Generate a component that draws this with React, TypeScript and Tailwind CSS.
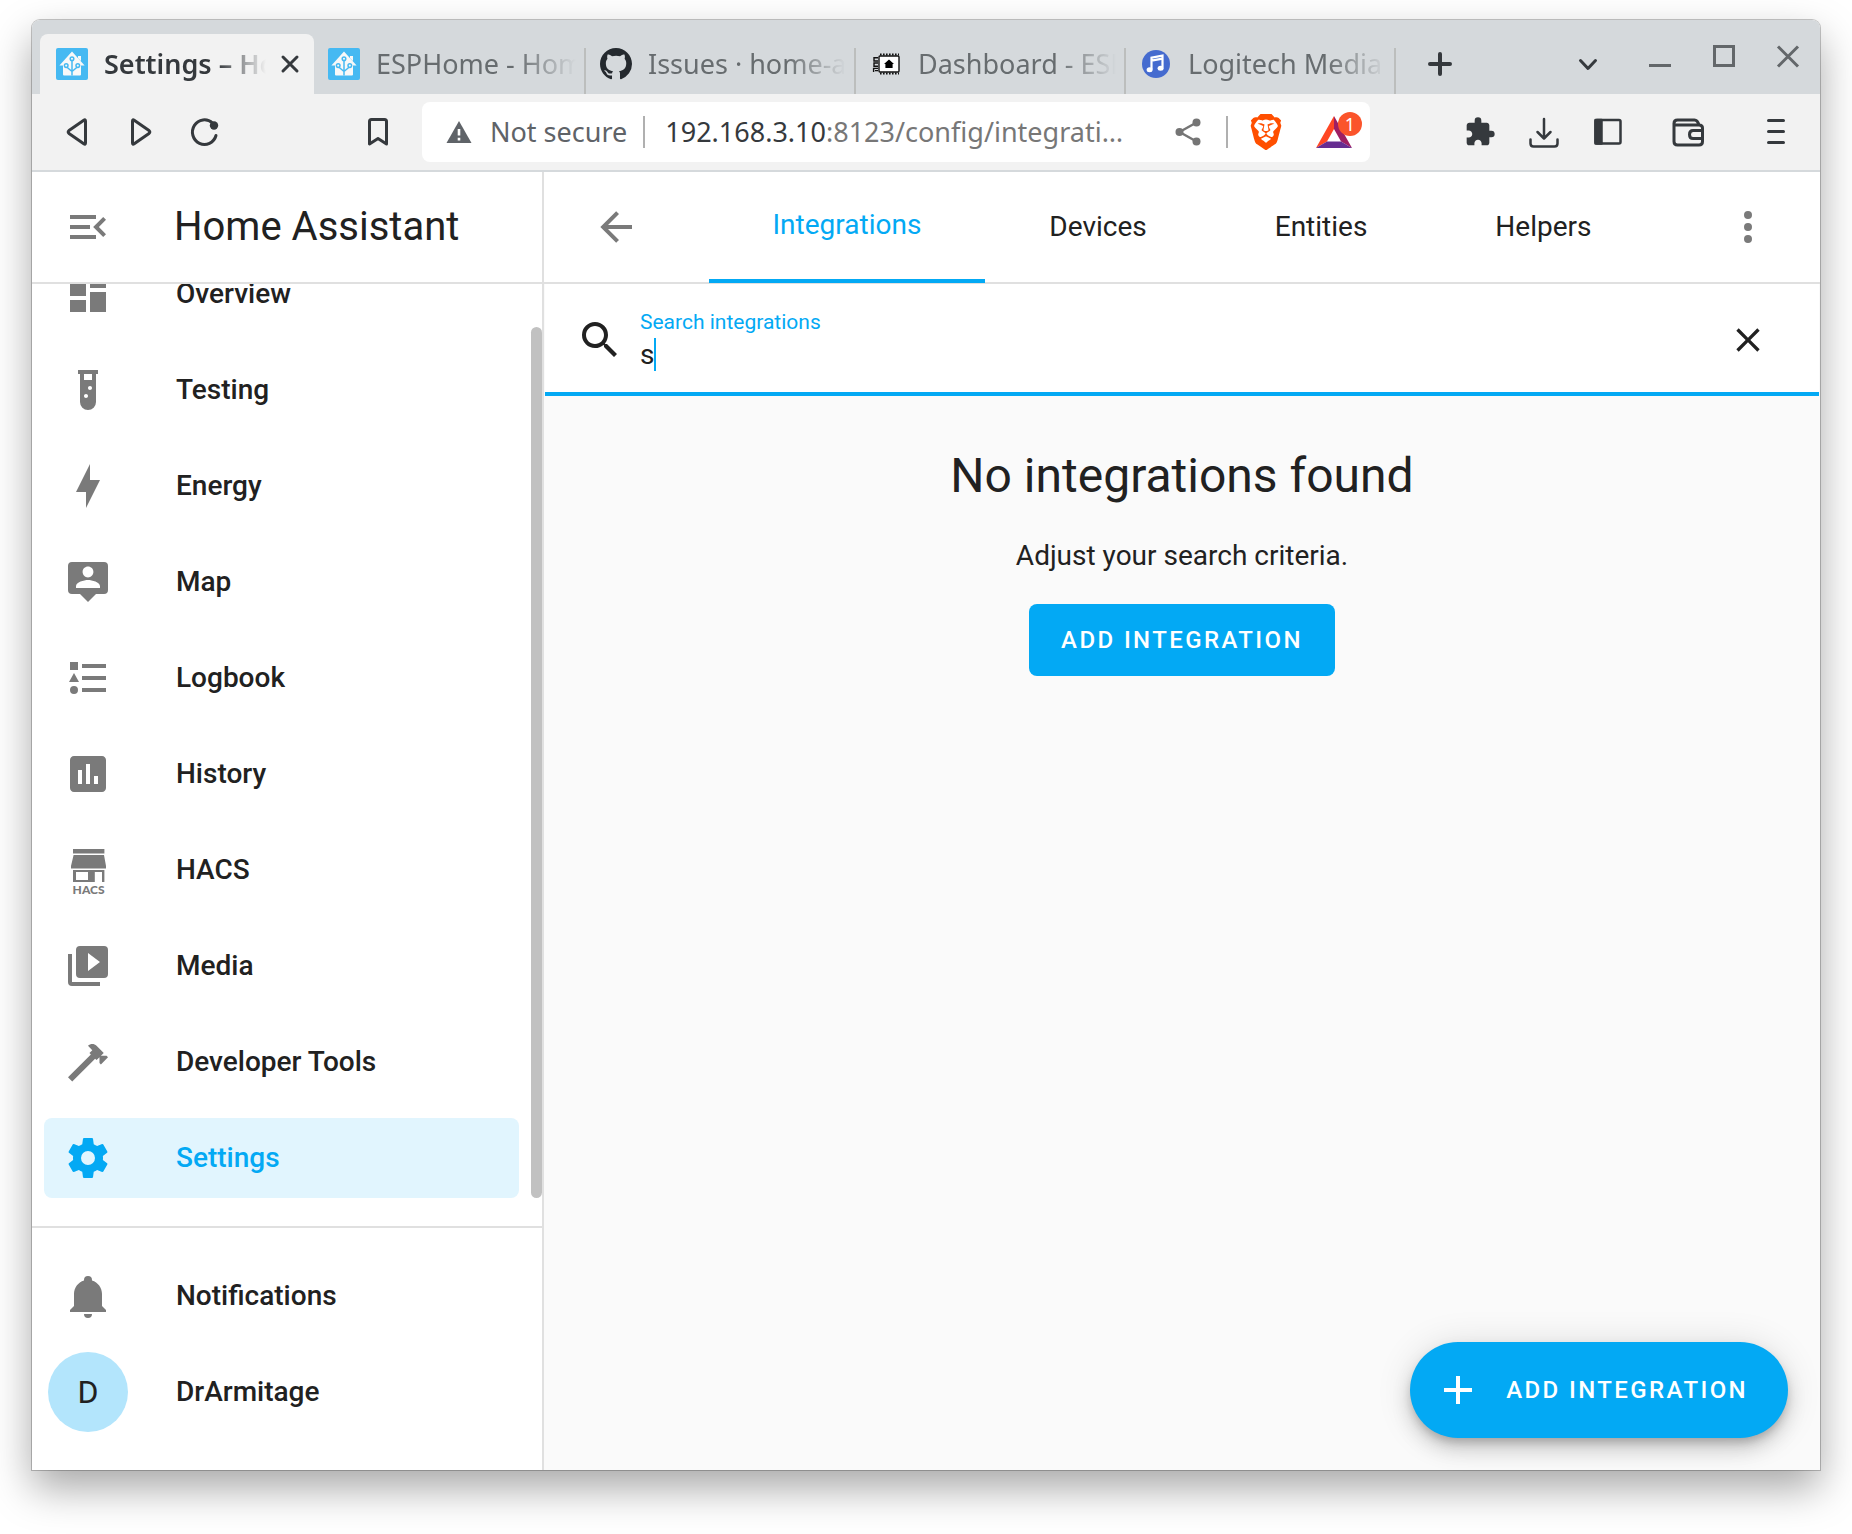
import type { ReactNode } from "react";
import { MdExtension } from "react-icons/md";
import { SiBrave } from "react-icons/si";

const mdi = {
  menuOpen:
    "M21,15.61L19.59,17L14.58,12L19.59,7L21,8.39L17.44,12L21,15.61M3,6H16V8H3V6M3,13V11H13V13H3M3,18V16H16V18H3Z",
  dashboard: "M13,3V9H21V3M13,21H21V11H13M3,21H11V15H3M3,13H11V3H3V13Z",
  testTube:
    "M7,2V4H8V18A4,4 0 0,0 12,22A4,4 0 0,0 16,18V4H17V2H7M11,16C10.4,16 10,15.6 10,15C10,14.4 10.4,14 11,14C11.6,14 12,14.4 12,15C12,15.6 11.6,16 11,16M13,12C12.4,12 12,11.6 12,11C12,10.4 12.4,10 13,10C13.6,10 14,10.4 14,11C14,11.6 13.6,12 13,12M14,7H10V4H14V7Z",
  bolt: "M11 15H6L13 1V9H18L11 23V15Z",
  tooltipAccount:
    "M20,2A2,2 0 0,1 22,4V16A2,2 0 0,1 20,18H16L12,22L8,18H4A2,2 0 0,1 2,16V4A2,2 0 0,1 4,2H20M12,4.3C10.5,4.3 9.3,5.5 9.3,7C9.3,8.5 10.5,9.7 12,9.7C13.5,9.7 14.7,8.5 14.7,7C14.7,5.5 13.5,4.3 12,4.3M18,15V14.1C18,12.1 14,11 12,11C10,11 6,12.1 6,14.1V15H18Z",
  listType:
    "M5,9.5L7.5,14H2.5L5,9.5M3,4H7V8H3V4M5,20A2,2 0 0,0 7,18A2,2 0 0,0 5,16A2,2 0 0,0 3,18A2,2 0 0,0 5,20M9,5V7H21V5H9M9,19H21V17H9V19M9,13H21V11H9V13Z",
  chartBox:
    "M9 17H7V10H9V17M13 17H11V7H13V17M17 17H15V13H17V17M19 3H5C3.89 3 3 3.89 3 5V19C3 20.11 3.89 21 5 21H19C20.11 21 21 20.11 21 19V5C21 3.89 20.11 3 19 3Z",
  playBoxMultiple:
    "M4,6H2V20A2,2 0 0,0 4,22H18V20H4V6M20,2H8A2,2 0 0,0 6,4V16A2,2 0 0,0 8,18H20A2,2 0 0,0 22,16V4A2,2 0 0,0 20,2M12,14.5V5.5L18,10L12,14.5Z",
  hammer:
    "M2,19.63L13.43,8.2L12.72,7.5L14.14,6.07L12,3.89C13.2,2.7 15.09,2.7 16.27,3.89L19.87,7.5L18.45,8.91H21.29L22,9.62L18.45,13.21L17.74,12.5V9.62L16.27,11.04L15.56,10.33L4.13,21.76L2,19.63Z",
  cog: "M12,15.5A3.5,3.5 0 0,1 8.5,12A3.5,3.5 0 0,1 12,8.5A3.5,3.5 0 0,1 15.5,12A3.5,3.5 0 0,1 12,15.5M19.43,12.97C19.47,12.65 19.5,12.33 19.5,12C19.5,11.67 19.47,11.34 19.43,11L21.54,9.37C21.73,9.22 21.78,8.95 21.66,8.73L19.66,5.27C19.54,5.05 19.27,4.96 19.05,5.05L16.56,6.05C16.04,5.66 15.5,5.32 14.87,5.07L14.5,2.42C14.46,2.18 14.25,2 14,2H10C9.75,2 9.54,2.18 9.5,2.42L9.13,5.07C8.5,5.32 7.96,5.66 7.44,6.05L4.95,5.05C4.73,4.96 4.46,5.05 4.34,5.27L2.34,8.73C2.21,8.95 2.27,9.22 2.46,9.37L4.57,11C4.53,11.34 4.5,11.67 4.5,12C4.5,12.33 4.53,12.65 4.57,12.97L2.46,14.63C2.27,14.78 2.21,15.05 2.34,15.27L4.34,18.73C4.46,18.95 4.73,19.03 4.95,18.95L7.44,17.94C7.96,18.34 8.5,18.68 9.13,18.93L9.5,21.58C9.54,21.82 9.75,22 10,22H14C14.25,22 14.46,21.82 14.5,21.58L14.87,18.93C15.5,18.67 16.04,18.34 16.56,17.94L19.05,18.95C19.27,19.03 19.54,18.95 19.66,18.73L21.66,15.27C21.78,15.05 21.73,14.78 21.54,14.63L19.43,12.97Z",
  bell: "M21,19V20H3V19L5,17V11C5,7.9 7.03,5.17 10,4.29C10,4.19 10,4.1 10,4A2,2 0 0,1 12,2A2,2 0 0,1 14,4C14,4.1 14,4.19 14,4.29C16.97,5.17 19,7.9 19,11V17L21,19M14,21A2,2 0 0,1 12,23A2,2 0 0,1 10,21",
  arrowLeft:
    "M20,11V13H8L13.5,18.5L12.08,19.92L4.16,12L12.08,4.08L13.5,5.5L8,11H20Z",
  dots: "M12,16A2,2 0 0,1 14,18A2,2 0 0,1 12,20A2,2 0 0,1 10,18A2,2 0 0,1 12,16M12,10A2,2 0 0,1 14,12A2,2 0 0,1 12,14A2,2 0 0,1 10,12A2,2 0 0,1 12,10M12,4A2,2 0 0,1 14,6A2,2 0 0,1 12,8A2,2 0 0,1 10,6A2,2 0 0,1 12,4Z",
  magnify:
    "M9.5,3A6.5,6.5 0 0,1 16,9.5C16,11.11 15.41,12.59 14.44,13.73L14.71,14H15.5L20.5,19L19,20.5L14,15.5V14.71L13.73,14.44C12.59,15.41 11.11,16 9.5,16A6.5,6.5 0 0,1 3,9.5A6.5,6.5 0 0,1 9.5,3M9.5,5C7,5 5,7 5,9.5C5,12 7,14 9.5,14C12,14 14,12 14,9.5C14,7 12,5 9.5,5Z",
  close:
    "M19,6.41L17.59,5L12,10.59L6.41,5L5,6.41L10.59,12L5,17.59L6.41,19L12,13.41L17.59,19L19,17.59L13.41,12L19,6.41Z",
  plus: "M19,13H13V19H11V13H5V11H11V5H13V11H19V13Z",
};

function Mdi({ path, className = "size-12" }: { path: string; className?: string }) {
  return (
    <svg viewBox="0 0 24 24" className={`shrink-0 ${className}`} fill="currentColor" fillRule="evenodd" aria-hidden="true">
      <path d={path} />
    </svg>
  );
}

function HacsIcon() {
  return (
    <svg viewBox="0 0 24 24" className="size-12 shrink-0" fill="currentColor" fillRule="evenodd" aria-hidden="true">
      <path d="M4.5 1.5H20.2V3.8H4.5ZM4.8 4.5H20L21 10V11.2H3.5V10ZM4.5 12H20.2V18H19V13H15.4V18H4.5ZM6 13V17H12V13Z" />
      <text x="12.3" y="23.9" fontSize="6" fontWeight="900" textAnchor="middle" fontFamily="Lato, sans-serif">
        HACS
      </text>
    </svg>
  );
}

function HomeAssistantFavicon() {
  return (
    <svg viewBox="0 0 32 32" className="size-8 shrink-0" aria-hidden="true">
      <rect width="32" height="32" rx="2" fill="#46b9f2" />
      <path d="M16 3.6 28.6 17.6H25V26.5Q25 27.4 24 27.4H8Q7 27.4 7 26.5V17.6H3.4ZM22 8H25V13L22 10Z" fill="#f8f8f8" />
      <g stroke="#46b9f2" strokeWidth="1.5" fill="none">
        <path d="M16 27.4V12.5M16 23.5 10.7 19M16 23.5 21.3 19" />
        <circle cx="16" cy="10.8" r="1.8" />
        <circle cx="10.2" cy="17.6" r="1.8" />
        <circle cx="21.8" cy="17.6" r="1.8" />
      </g>
    </svg>
  );
}

function GithubFavicon() {
  return (
    <svg viewBox="0 0 16 16" className="size-8 shrink-0" fill="#24292e" aria-hidden="true">
      <path d="M8 0C3.58 0 0 3.58 0 8c0 3.54 2.29 6.53 5.47 7.59.4.07.55-.17.55-.38 0-.19-.01-.82-.01-1.49-2.01.37-2.53-.49-2.69-.94-.09-.23-.48-.94-.82-1.13-.28-.15-.68-.52-.01-.53.63-.01 1.08.58 1.23.82.72 1.21 1.87.87 2.33.66.07-.52.28-.87.51-1.07-1.78-.2-3.64-.89-3.64-3.95 0-.87.31-1.59.82-2.15-.08-.2-.36-1.02.08-2.12 0 0 .67-.21 2.2.82.64-.18 1.32-.27 2-.27.68 0 1.36.09 2 .27 1.53-1.04 2.2-.82 2.2-.82.44 1.1.16 1.92.08 2.12.51.56.82 1.27.82 2.15 0 3.07-1.87 3.75-3.65 3.95.29.25.54.73.54 1.48 0 1.07-.01 1.93-.01 2.2 0 .21.15.46.55.38A8.013 8.013 0 0016 8c0-4.42-3.58-8-8-8z" />
    </svg>
  );
}

function ChipFavicon() {
  return (
    <svg viewBox="0 0 32 32" className="size-8 shrink-0" aria-hidden="true">
      <path d="M10 6.5H29M10 25.5H29" stroke="#111" strokeWidth="1.8" strokeDasharray="1.6 1.4" fill="none" />
      <rect x="9" y="8" width="20" height="16" rx="1" fill="#fff" stroke="#111" strokeWidth="1.4" />
      <path d="M8 9.7H4V13H8M8 15H4V18.2H8M8 20.4H3.6V24M8 22.6H5" stroke="#111" strokeWidth="1.4" fill="none" />
      <path d="M19 11.5 24 16H22.6V20H15.4V16H14Z" fill="#000" />
    </svg>
  );
}

function MusicFavicon() {
  return (
    <svg viewBox="0 0 32 32" className="size-8 shrink-0" aria-hidden="true">
      <circle cx="16" cy="16" r="14" fill="#456bcf" />
      <path d="M11.5 21.5V9.6L22.5 7.6V19.6M11.5 12.6 22.5 10.6" stroke="#fff" strokeWidth="2.2" fill="none" />
      <ellipse cx="9.6" cy="21.8" rx="3" ry="2.5" fill="#fff" />
      <ellipse cx="20.6" cy="20.2" rx="3" ry="2.5" fill="#fff" />
    </svg>
  );
}

function BatIcon() {
  return (
    <svg viewBox="0 0 36 32" className="h-8 w-9" aria-hidden="true">
      <path d="M18 0 0 32 11 25.5 18 13Z" fill="#ff4724" />
      <path d="M18 0 36 32 25 25.5 18 13Z" fill="#9e1f63" />
      <path d="M0 32H36L25 25.5H11Z" fill="#662d91" />
    </svg>
  );
}

function Stroke({ children, className = "size-8", width = 3 }: { children: ReactNode; className?: string; width?: number }) {
  return (
    <svg
      viewBox="0 0 32 32"
      className={`shrink-0 ${className}`}
      fill="none"
      stroke="currentColor"
      strokeWidth={width}
      strokeLinecap="round"
      strokeLinejoin="round"
      aria-hidden="true"
    >
      {children}
    </svg>
  );
}

function IconButton({ label, children, className = "" }: { label: string; children: ReactNode; className?: string }) {
  return (
    <button type="button" aria-label={label} className={`flex size-12 shrink-0 items-center justify-center ${className}`}>
      {children}
    </button>
  );
}

function BrowserTab({ icon, title, width = "w-[270px]" }: { icon: ReactNode; title: string; width?: string }) {
  return (
    <div className={`flex h-[60px] min-w-0 items-end ${width}`}>
      <button
        type="button"
        role="tab"
        aria-selected="false"
        className="flex h-[60px] min-w-0 flex-1 items-center gap-4 pr-2 pl-[14px] text-[#676c6f]"
      >
        {icon}
        <span className="min-w-0 flex-1 overflow-hidden text-left whitespace-nowrap [mask-image:linear-gradient(to_right,black_70%,transparent)]">
          {title}
        </span>
      </button>
      <span className="h-[46px] w-0.5 bg-[#bcbebd]" />
    </div>
  );
}

function TabStrip() {
  return (
    <div className="flex h-[74px] items-end rounded-t-lg bg-[#d5d9dc] pr-2 pl-2 text-[27px] text-[#35393d]">
      <div role="tablist" aria-label="Open pages" className="flex min-w-0 items-end">
        <div className="flex h-[60px] w-[274px] items-center rounded-t-lg bg-[#f2f2f2] pl-4">
          <button type="button" role="tab" aria-selected="true" className="flex min-w-0 flex-1 items-center gap-4 font-semibold">
            <HomeAssistantFavicon />
            <span className="min-w-0 flex-1 overflow-hidden text-left whitespace-nowrap [mask-image:linear-gradient(to_right,black_70%,transparent)]">
              Settings – Home Assistant
            </span>
          </button>
          <IconButton label="Close tab">
            <Stroke className="size-8" width={3}>
              <path d="M9 9 23 23M23 9 9 23" />
            </Stroke>
          </IconButton>
        </div>
        <BrowserTab icon={<HomeAssistantFavicon />} title="ESPHome - Home Assistant" width="w-[272px]" />
        <BrowserTab icon={<GithubFavicon />} title="Issues · home-assistant" />
        <BrowserTab icon={<ChipFavicon />} title="Dashboard - ESPHome" />
        <BrowserTab icon={<MusicFavicon />} title="Logitech Media Server" />
      </div>
      <div className="flex h-[60px] flex-1 items-center justify-between pl-5">
        <IconButton label="New tab">
          <Stroke width={4}>
            <path d="M16 6V26M6 16H26" />
          </Stroke>
        </IconButton>
        <IconButton label="Search tabs">
          <Stroke width={3}>
            <path d="M8.500 12.500 16 20.500 23.500 12.500" />
          </Stroke>
        </IconButton>
      </div>
      <div className="flex h-full items-center gap-4 pl-6 text-[#63676a]">
        <IconButton label="Minimise">
          <Stroke width={3}>
            <path d="M5 24.500H27" strokeLinecap="butt" />
          </Stroke>
        </IconButton>
        <IconButton label="Maximise">
          <Stroke width={3}>
            <rect x="6.500" y="5.500" width="19" height="19" strokeLinejoin="miter" />
          </Stroke>
        </IconButton>
        <IconButton label="Close window">
          <Stroke width={3}>
            <path d="M6 5.500 26 25.500M26 5.500 6 25.500" strokeLinecap="butt" />
          </Stroke>
        </IconButton>
      </div>
    </div>
  );
}

function Toolbar() {
  return (
    <div className="flex h-[78px] items-center border-b-2 border-[#d5d9dc] bg-[#f2f2f2] pr-5 pl-[21px] text-[#35393d]">
      <div className="flex gap-4">
        <IconButton label="Back">
          <Stroke>
            <path d="M24.500 5V27Q24.500 29 22.800 27.800L8 17.500Q6.500 16 8 14.500L22.800 4.200Q24.500 3 24.500 5Z" />
          </Stroke>
        </IconButton>
        <IconButton label="Forward">
          <Stroke>
            <path d="M7.500 5V27Q7.500 29 9.200 27.800L24 17.500Q25.500 16 24 14.500L9.200 4.200Q7.500 3 7.500 5Z" />
          </Stroke>
        </IconButton>
        <IconButton label="Reload">
          <Stroke>
            <path d="M23.500 7A12 12.300 0 1 0 27 19.500" />
            <circle cx="25" cy="9.500" r="4.200" fill="currentColor" stroke="none" />
          </Stroke>
        </IconButton>
      </div>
      <IconButton label="Bookmark" className="ml-[125px]">
        <Stroke>
          <path d="M7.500 5.500Q7.500 3.500 9.500 3.500H22.500Q24.500 3.500 24.500 5.500V28L16 22.500 7.500 28Z" />
        </Stroke>
      </IconButton>
      <div className="ml-5 flex h-[60px] min-w-0 flex-1 items-center rounded-lg bg-white pr-2 pl-6 text-[27px]">
        <svg viewBox="0 0 26 24" className="h-6 w-[26px] shrink-0" aria-hidden="true">
          <path d="M13 1 25.500 23H.500Z" fill="#5f6368" />
          <path d="M13 9V15.500M13 17.800V20.600" stroke="#fff" strokeWidth="2.600" />
        </svg>
        <span className="ml-[18px] whitespace-nowrap text-[#5f6368]">Not secure</span>
        <span className="ml-4 h-8 w-0.5 shrink-0 bg-[#b0b0b0]" />
        <div
          role="textbox"
          aria-label="Address"
          contentEditable
          suppressContentEditableWarning
          className="ml-5 min-w-0 flex-1 overflow-hidden whitespace-nowrap text-[#777]"
        >
          <span className="text-[#35393d]">192.168.3.10</span>:8123/config/integrati…
        </div>
        <IconButton label="Share" className="text-[#757575]">
          <Stroke width={2.5}>
            <path d="M24.500 6.500 7.500 16 24.500 25.500" />
            <g fill="currentColor" stroke="none">
              <circle cx="24.500" cy="6.500" r="4" />
              <circle cx="7.500" cy="16" r="4" />
              <circle cx="24.500" cy="25.500" r="4" />
            </g>
          </Stroke>
        </IconButton>
        <span className="ml-[14px] h-8 w-0.5 shrink-0 bg-[#b0b0b0]" />
        <IconButton label="Brave Shields" className="ml-[14px]">
          <SiBrave className="size-9 text-[#ff4f00]" />
        </IconButton>
        <button type="button" aria-label="Brave Rewards, 1 notification" className="relative ml-[26px] flex h-12 w-[46px] shrink-0 items-center">
          <BatIcon />
          <span className="absolute top-1 right-0 flex size-6 items-center justify-center rounded-full bg-[#fb542b] text-lg text-white">1</span>
        </button>
      </div>
      <div className="ml-[86px] flex gap-4">
        <IconButton label="Extensions">
          <MdExtension className="size-8" />
        </IconButton>
        <IconButton label="Downloads">
          <Stroke width={2.5}>
            <path d="M16 3V22M9.500 16 16 22.500 22.500 16M2.500 23.500V27.500Q2.500 30.500 5.500 30.500H26.500Q29.500 30.500 29.500 27.500V23.500" />
          </Stroke>
        </IconButton>
        <IconButton label="Side panel">
          <Stroke width={2.5}>
            <rect x="3.500" y="4" width="25" height="23.500" rx="1.500" />
            <path d="M3.500 4H9.500V27.500H3.500Z" fill="currentColor" />
          </Stroke>
        </IconButton>
        <IconButton label="Wallet" className="ml-4">
          <Stroke width={3}>
            <path d="M2 7.500Q2 4 5.500 4H22.500Q25.500 4 27 9M2 7V25.500Q2 29 5.500 29H27Q30.500 29 30.500 25.500V12Q30.500 9 27 9H3.500M30.500 14.500H21Q17.500 14.500 17.500 18.500T21 22.500H30.500" />
          </Stroke>
        </IconButton>
        <IconButton label="Menu" className="ml-6">
          <Stroke width={3}>
            <path d="M8.500 4.500H23.500M8.500 15.500H23.500M8.500 26.500H23.500" />
          </Stroke>
        </IconButton>
      </div>
    </div>
  );
}

const navItems: { label: string; icon: ReactNode; active?: boolean }[] = [
  { label: "Overview", icon: <Mdi path={mdi.dashboard} /> },
  { label: "Testing", icon: <Mdi path={mdi.testTube} /> },
  { label: "Energy", icon: <Mdi path={mdi.bolt} /> },
  { label: "Map", icon: <Mdi path={mdi.tooltipAccount} /> },
  { label: "Logbook", icon: <Mdi path={mdi.listType} /> },
  { label: "History", icon: <Mdi path={mdi.chartBox} /> },
  { label: "HACS", icon: <HacsIcon /> },
  { label: "Media", icon: <Mdi path={mdi.playBoxMultiple} /> },
  { label: "Developer Tools", icon: <Mdi path={mdi.hammer} /> },
  { label: "Settings", icon: <Mdi path={mdi.cog} />, active: true },
];

function NavLink({ label, icon, active }: { label: string; icon: ReactNode; active?: boolean }) {
  return (
    <a
      href="#"
      aria-current={active ? "page" : undefined}
      className={`flex h-20 items-center gap-16 rounded-lg pl-5 text-[28px] font-medium ${
        active ? "bg-[#e1f5fe] text-[#03a9f4]" : "text-[#212121]"
      }`}
    >
      <span className={active ? "text-[#03a9f4]" : "text-[#7a7a7a]"}>{icon}</span>
      {label}
    </a>
  );
}

function Sidebar() {
  return (
    <aside className="flex w-[512px] shrink-0 flex-col border-r-2 border-[#e0e0e0] bg-white">
      <div className="flex h-28 items-center gap-[62px] border-b-2 border-[#e0e0e0] pl-8">
        <button type="button" aria-label="Collapse sidebar" className="text-[#7a7a7a]">
          <Mdi path={mdi.menuOpen} />
        </button>
        <h1 className="text-[40px] text-[#212121]">Home Assistant</h1>
      </div>
      <div className="flex flex-1 overflow-hidden">
        <nav aria-label="Main" className="-mt-[30px] flex flex-1 flex-col gap-4 pr-3 pb-7 pl-3">
          {navItems.map((item) => (
            <NavLink key={item.label} {...item} />
          ))}
        </nav>
        <div className="flex w-[11px] pt-[43px] pb-7" aria-hidden="true">
          <span className="flex-1 rounded-full bg-[#c1c1c1]" />
        </div>
      </div>
      <div className="flex flex-col gap-4 border-t-2 border-[#e0e0e0] px-3 pt-7 pb-[38px]">
        <NavLink label="Notifications" icon={<Mdi path={mdi.bell} />} />
        <a href="#" className="flex h-20 items-center gap-12 pl-1 text-[28px] font-medium text-[#212121]">
          <span className="flex size-20 items-center justify-center rounded-full bg-[#b3e5fc] text-[32px] font-normal">D</span>
          DrArmitage
        </a>
      </div>
    </aside>
  );
}

const sections = ["Integrations", "Devices", "Entities", "Helpers"];

function Content() {
  return (
    <main className="relative flex min-w-0 flex-1 flex-col bg-[#fafafa] text-[#212121]">
      <header className="flex h-28 items-center border-b-2 border-[#e0e0e0] bg-white px-12">
        <button type="button" aria-label="Back" className="text-[#7a7a7a]">
          <Mdi path={mdi.arrowLeft} />
        </button>
        <nav aria-label="Sections" className="-mb-px flex flex-1 justify-center self-stretch">
          {sections.map((section, index) => (
            <a
              key={section}
              href="#"
              className={`flex items-center px-16 pb-0.5 text-[28px] ${
                index === 0 ? "border-b-4 border-[#03a9f4] text-[#03a9f4]" : ""
              }`}
            >
              {section}
            </a>
          ))}
        </nav>
        <button type="button" aria-label="More options" className="text-[#7a7a7a]">
          <Mdi path={mdi.dots} />
        </button>
      </header>
      <div className="mx-px flex h-28 items-start border-b-4 border-[#03a9f4] bg-white pr-[47px] pl-[31px]">
        <Mdi path={mdi.magnify} className="mt-8 size-12" />
        <div className="ml-4 flex-1 pt-[26px]">
          <label htmlFor="search" className="block text-[21px] leading-6 text-[#03a9f4]">
            Search integrations
          </label>
          <div className="mt-1 flex">
            <input
              id="search"
              type="text"
              defaultValue="s"
              className="field-sizing-content h-[33px] min-w-0 text-[28px] leading-[33px] outline-none"
            />
            <span className="h-[33px] w-0.5 bg-[#03a9f4]" aria-hidden="true" />
          </div>
        </div>
        <IconButton label="Clear search" className="mt-8">
          <Mdi path={mdi.close} className="size-10" />
        </IconButton>
      </div>
      <div className="flex flex-col items-center pt-[52px]">
        <h2 className="text-[48px] leading-14">No integrations found</h2>
        <p className="mt-9 text-[28px] leading-8">Adjust your search criteria.</p>
        <button
          type="button"
          className="mt-8 h-[72px] rounded-lg bg-[#03a9f4] px-8 text-[24px] font-medium tracking-widest text-white uppercase"
        >
          Add integration
        </button>
      </div>
      <button
        type="button"
        className="absolute right-8 bottom-8 flex h-24 items-center gap-6 rounded-full bg-[#03a9f4] pr-10 pl-6 text-[24px] font-medium tracking-widest text-white uppercase shadow-[0_6px_10px_-2px_rgba(0,0,0,0.2),0_12px_20px_rgba(0,0,0,0.14),0_2px_36px_rgba(0,0,0,0.12)]"
      >
        <Mdi path={mdi.plus} />
        Add integration
      </button>
    </main>
  );
}

export default function App() {
  return (
    <div className="flex min-h-screen bg-white px-8 pt-5 pb-16 font-['Roboto',sans-serif]">
      <div className="flex min-w-0 flex-1 flex-col rounded-t-lg shadow-[0_0_0_1px_rgba(0,0,0,0.22),0_18px_42px_rgba(0,0,0,0.35)]">
        <div className="font-['Noto_Sans',sans-serif]">
          <TabStrip />
          <Toolbar />
        </div>
        <div className="flex flex-1">
          <Sidebar />
          <Content />
        </div>
      </div>
    </div>
  );
}
